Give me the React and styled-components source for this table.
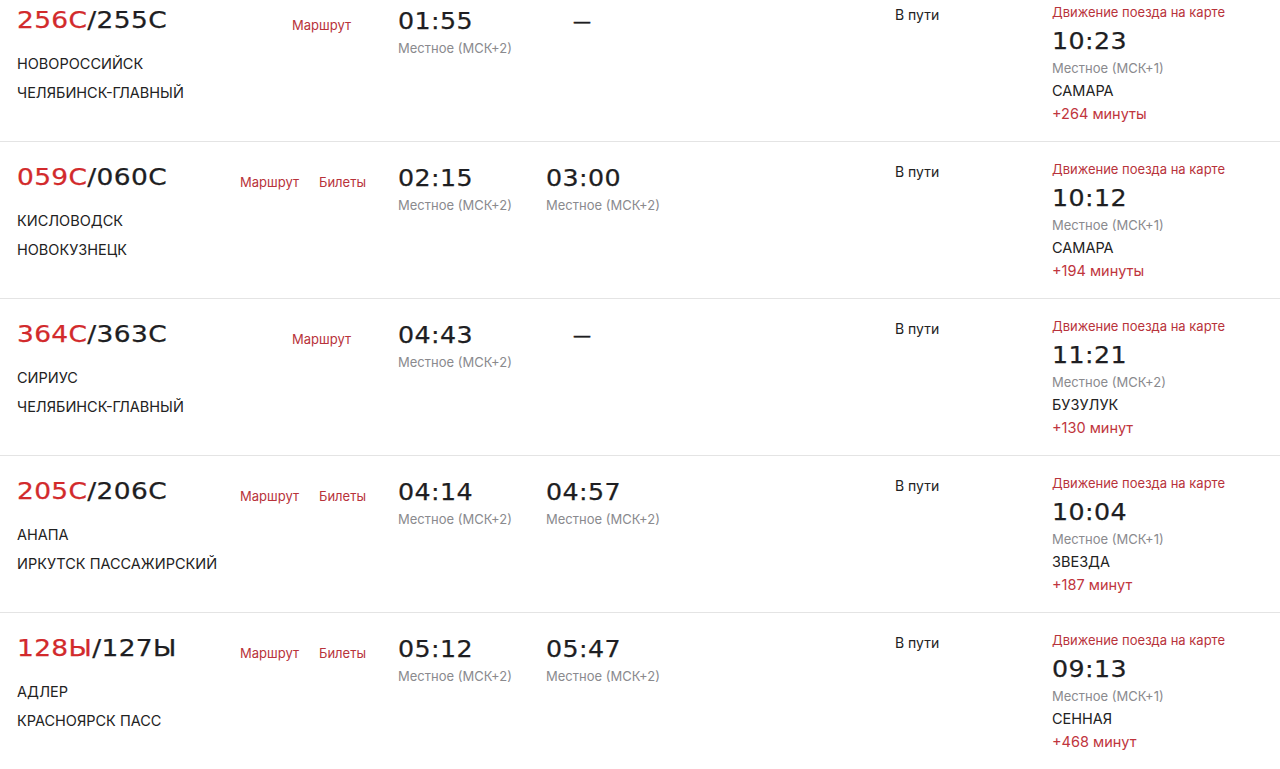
import React from "react";
import styled, { createGlobalStyle } from "styled-components";

const Global = createGlobalStyle`
  html, body { margin: 0; padding: 0; background: #fff; }
  body { font-family: Inter, "Noto Sans", sans-serif; color: #222; overflow: hidden; }
`;

const List = styled.div`
  margin-top: -15px;
`;

const Row = styled.div`
  display: grid;
  grid-template-columns: 213px 168px 148px 349px 157px 1fr;
  padding-left: 17px;
  height: 157px;
  box-sizing: border-box;
  border-bottom: 1px solid #e4e4e4;
`;

const Cell = styled.div`
  padding-top: ${(p) => p.$top || 0}px;
  display: flex;
  flex-direction: column;
  align-items: flex-start;
`;

const Number = styled.div`
  display: inline-block;
  font-family: "DejaVu Sans", sans-serif;
  font-size: 23px;
  line-height: 28px;
  letter-spacing: 0.3px;
  color: #1e1e22;
  white-space: nowrap;
  -webkit-text-stroke: 0.25px currentColor;
  transform: scaleX(1.15);
  transform-origin: left center;
`;

const Red = styled.span`
  color: #d22a2c;
`;

const Station = styled.div`
  font-size: 14.5px;
  line-height: 29px;
  color: #222;
  white-space: nowrap;
`;

const Stations = styled.div`
  margin-top: 15px;
`;

const Links = styled.div`
  display: flex;
  justify-content: flex-end;
  gap: 20px;
  padding-right: ${(p) => (p.$single ? 47 : 32)}px;
  padding-top: ${(p) => p.$top}px;
`;

const Link = styled.a`
  font-size: 13px;
  line-height: 18px;
  color: #b8333b;
  text-decoration: none;
`;

const Time = styled.div`
  display: inline-block;
  font-family: "DejaVu Sans", sans-serif;
  font-size: 23px;
  line-height: 28px;
  letter-spacing: 0.4px;
  color: #1e1e22;
  -webkit-text-stroke: 0.25px currentColor;
  transform: scaleX(1.1);
  transform-origin: left center;
  margin-top: ${(p) => p.$mt || 0}px;
`;

const Dash = styled.div`
  font-family: "DejaVu Sans", sans-serif;
  font-size: 18px;
  line-height: 28px;
  color: #1e1e22;
  -webkit-text-stroke: 0.4px currentColor;
  padding-left: 27px;
`;

const Zone = styled.div`
  font-size: 13px;
  line-height: 18px;
  color: #8a8a8e;
  margin-top: ${(p) => p.$mt || 4}px;
`;

const Status = styled.div`
  font-size: 14px;
  line-height: 18px;
  color: #222;
`;

const MapLink = styled.div`
  font-size: 13px;
  line-height: 18px;
  color: #b8333b;
`;

const Place = styled.div`
  font-size: 14.5px;
  line-height: 20px;
  color: #222;
  margin-top: 4px;
`;

const Delay = styled.div`
  font-size: 14.5px;
  line-height: 20px;
  color: #c0353d;
  margin-top: 3px;
`;

const rows = [
  { a: "256С", b: "255С", st: ["НОВОРОССИЙСК", "ЧЕЛЯБИНСК-ГЛАВНЫЙ"], tickets: false, dep: "01:55", depZ: "Местное (МСК+2)", arr: null, t: "10:23", tz: "Местное (МСК+1)", place: "САМАРА", delay: "+264 минуты" },
  { a: "059С", b: "060С", st: ["КИСЛОВОДСК", "НОВОКУЗНЕЦК"], tickets: true, dep: "02:15", depZ: "Местное (МСК+2)", arr: "03:00", arrZ: "Местное (МСК+2)", t: "10:12", tz: "Местное (МСК+1)", place: "САМАРА", delay: "+194 минуты" },
  { a: "364С", b: "363С", st: ["СИРИУС", "ЧЕЛЯБИНСК-ГЛАВНЫЙ"], tickets: false, dep: "04:43", depZ: "Местное (МСК+2)", arr: null, t: "11:21", tz: "Местное (МСК+2)", place: "БУЗУЛУК", delay: "+130 минут" },
  { a: "205С", b: "206С", st: ["АНАПА", "ИРКУТСК ПАССАЖИРСКИЙ"], tickets: true, dep: "04:14", depZ: "Местное (МСК+2)", arr: "04:57", arrZ: "Местное (МСК+2)", t: "10:04", tz: "Местное (МСК+1)", place: "ЗВЕЗДА", delay: "+187 минут" },
  { a: "128Ы", b: "127Ы", st: ["АДЛЕР", "КРАСНОЯРСК ПАСС"], tickets: true, dep: "05:12", depZ: "Местное (МСК+2)", arr: "05:47", arrZ: "Местное (МСК+2)", t: "09:13", tz: "Местное (МСК+1)", place: "СЕННАЯ", delay: "+468 минут" },
];

export default function App() {
  return (
    <>
      <Global />
      <List>
        {rows.map((r) => (
          <Row key={r.a}>
            <Cell $top={21}>
              <Number>
                <Red>{r.a}</Red>/{r.b}
              </Number>
              <Stations>
                {r.st.map((s) => (
                  <Station key={s}>{s}</Station>
                ))}
              </Stations>
            </Cell>
            <Links $top={31} $single={!r.tickets}>
              <Link>Маршрут</Link>
              {r.tickets && <Link>Билеты</Link>}
            </Links>
            <Cell $top={22}>
              <Time>{r.dep}</Time>
              <Zone>{r.depZ}</Zone>
            </Cell>
            <Cell $top={22}>
              {r.arr ? (
                <>
                  <Time>{r.arr}</Time>
                  <Zone>{r.arrZ}</Zone>
                </>
              ) : (
                <Dash>—</Dash>
              )}
            </Cell>
            <Cell $top={21}>
              <Status>В пути</Status>
            </Cell>
            <Cell $top={18}>
              <MapLink>Движение поезда на карте</MapLink>
              <Time $mt={6}>{r.t}</Time>
              <Zone $mt={4}>{r.tz}</Zone>
              <Place>{r.place}</Place>
              <Delay>{r.delay}</Delay>
            </Cell>
          </Row>
        ))}
      </List>
    </>
  );
}
